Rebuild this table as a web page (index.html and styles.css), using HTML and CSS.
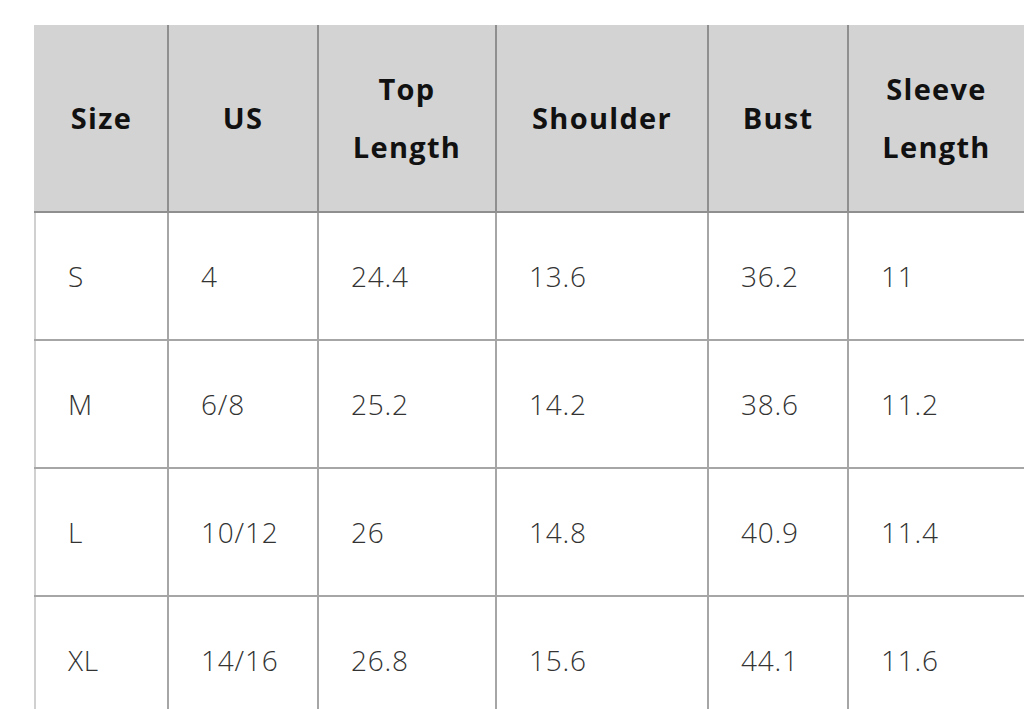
FILE: index.html
```html
<!DOCTYPE html>
<html>
<head>
<meta charset="utf-8">
<link rel="stylesheet" href="styles.css">
</head>
<body>
<div class="wrap">
<table class="sizes">
  <colgroup>
    <col class="c1"><col class="c2"><col class="c3"><col class="c4"><col class="c5"><col class="c6">
  </colgroup>
  <thead>
    <tr>
      <th>Size</th><th>US</th><th>Top<br>Length</th><th>Shoulder</th><th>Bust</th><th>Sleeve<br>Length</th>
    </tr>
  </thead>
  <tbody>
    <tr><td>S</td><td>4</td><td>24.4</td><td>13.6</td><td>36.2</td><td>11</td></tr>
    <tr><td>M</td><td>6/8</td><td>25.2</td><td>14.2</td><td>38.6</td><td>11.2</td></tr>
    <tr><td>L</td><td>10/12</td><td>26</td><td>14.8</td><td>40.9</td><td>11.4</td></tr>
    <tr><td>XL</td><td>14/16</td><td>26.8</td><td>15.6</td><td>44.1</td><td>11.6</td></tr>
  </tbody>
</table>
</div>
</body>
</html>
```
FILE: styles.css
```css
html, body {
  margin: 0;
  padding: 0;
  background: #ffffff;
  overflow: hidden;
}
.wrap {
  padding: 25px 0 0 34px;
  width: 1200px;
}
.sizes {
  border-collapse: collapse;
  table-layout: fixed;
  width: 989px;
  font-family: "Open Sans", "Noto Sans", sans-serif;
}
.c1 { width: 133px; }
.c2 { width: 150px; }
.c3 { width: 178px; }
.c4 { width: 212px; }
.c5 { width: 140px; }
.c6 { width: 176px; }
.sizes th {
  background: #d3d3d3;
  color: #111111;
  font-weight: 700;
  font-size: 29px;
  letter-spacing: 1.3px;
  line-height: 58px;
  height: 186px;
  padding: 0;
  text-align: center;
  vertical-align: middle;
  border-left: 2px solid #8f8f8f;
  border-bottom: 2px solid #8f8f8f;
}
.sizes th:first-child {
  border-left: 2px solid #d3d3d3;
}
.sizes td {
  color: #333333;
  font-weight: 300;
  font-size: 28px;
  letter-spacing: 0.8px;
  height: 126px;
  padding: 0 0 0 32px;
  text-align: left;
  vertical-align: middle;
  border-left: 2px solid #a6a6a6;
  border-bottom: 2px solid #a6a6a6;
}
.sizes td:first-child {
  border-left: 2px solid #d0d0d0;
}
```
